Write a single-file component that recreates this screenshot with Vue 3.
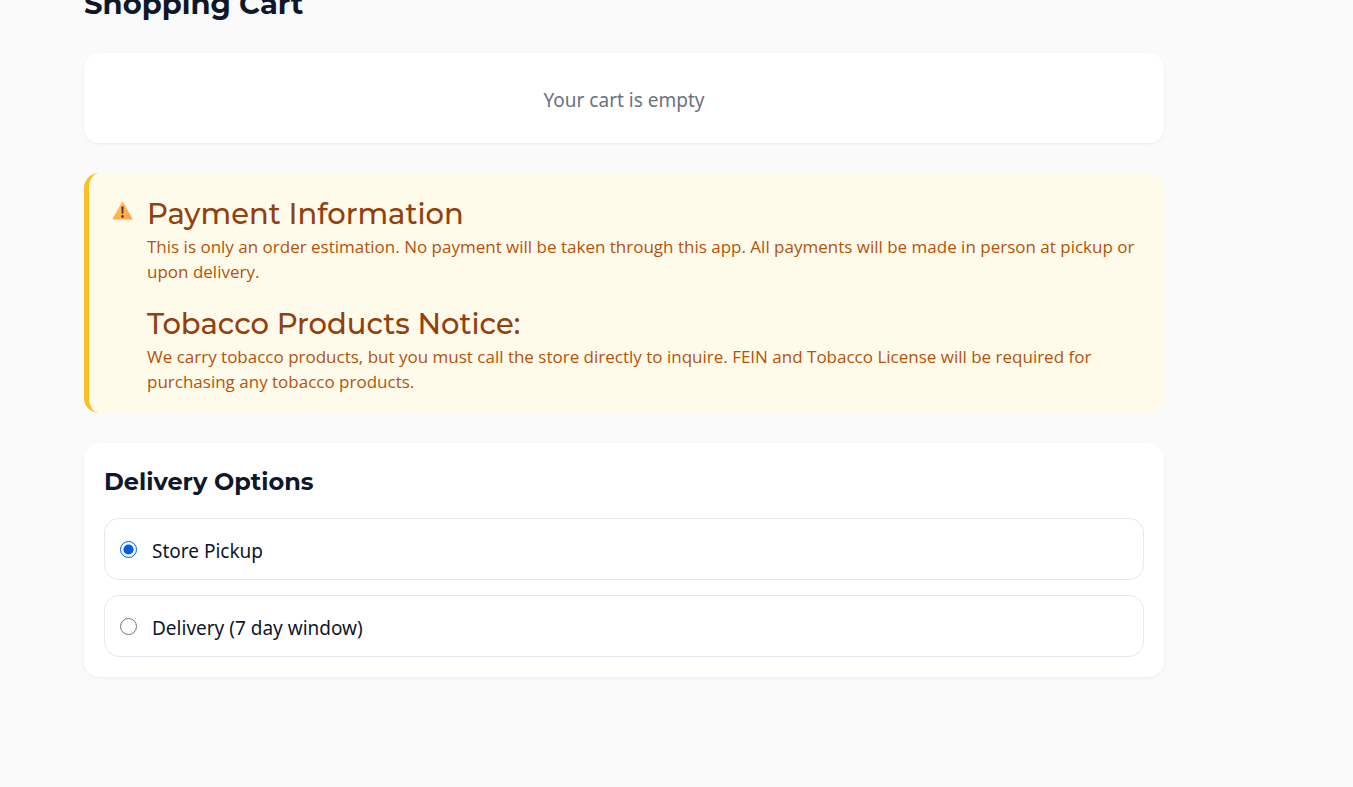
<script setup>
import { ref } from 'vue'

const method = ref('pickup')

const notices = [
  {
    title: 'Payment Information',
    text: 'This is only an order estimation. No payment will be taken through this app. All payments will be made in person at pickup or upon delivery.',
  },
  {
    title: 'Tobacco Products Notice:',
    text: 'We carry tobacco products, but you must call the store directly to inquire. FEIN and Tobacco License will be required for purchasing any tobacco products.',
  },
]

const options = [
  { value: 'pickup', label: 'Store Pickup' },
  { value: 'delivery', label: 'Delivery (7 day window)' },
]
</script>

<template>
  <main class="page">
    <h1 class="page-title">Shopping Cart</h1>

    <section class="card cart">
      <p class="empty">Your cart is empty</p>
    </section>

    <section class="notice">
      <svg class="warning" viewBox="0 0 20 20" aria-hidden="true">
        <defs>
          <linearGradient id="warning-fill" x1="0" y1="0" x2="1" y2="1">
            <stop offset="0" stop-color="#ffc857" />
            <stop offset="1" stop-color="#ff9f4a" />
          </linearGradient>
        </defs>
        <path
          d="M9.3 1.2Q10 .4 10.7 1.2L19.8 17.4Q20.2 18.6 19 18.6H1Q-.2 18.6.2 17.4Z"
          fill="url(#warning-fill)"
        />
        <path d="M8.9 5.6h2.2l-.3 7.2H9.2Z" fill="#433b4b" />
        <circle cx="10" cy="15.4" r="1.3" fill="#433b4b" />
      </svg>
      <div class="notice-list">
        <div v-for="notice in notices" :key="notice.title">
          <h2 class="notice-title">{{ notice.title }}</h2>
          <p class="notice-text">{{ notice.text }}</p>
        </div>
      </div>
    </section>

    <section class="card delivery">
      <h2 class="section-title">Delivery Options</h2>
      <div class="options">
        <label v-for="option in options" :key="option.value" class="option">
          <input v-model="method" class="radio" type="radio" name="method" :value="option.value" />
          <span class="option-label">{{ option.label }}</span>
        </label>
      </div>
    </section>
  </main>
</template>

<style>
html {
  background: #fafafa;
}
</style>

<style scoped>
.page {
  display: flow-root;
  margin: 0 189px 0 84px;
  padding-bottom: 40px;
  color: #0f172a;
  font-family: "Segoe UI", "Noto Sans", "Open Sans", sans-serif;
  font-size: 19px;
  line-height: 30px;
}

h1,
h2,
p {
  margin: 0;
}

.page-title,
.section-title,
.notice-title {
  font-family: Montserrat, Inter, sans-serif;
}

.page-title {
  margin: -16px 0 29px;
  font-size: 29px;
  font-weight: 700;
  line-height: 40px;
}

.card {
  border-radius: 15px;
  background: #fff;
  box-shadow: 0 1px 3px rgb(0 0 0 / 6%);
}

.cart {
  padding: 32px 30px 28px;
  text-align: center;
}

.empty {
  color: #6b7280;
}

.notice {
  display: flex;
  gap: 14px;
  margin: 30px 0;
  padding: 21px 24px 19px 23px;
  border-left: 5px solid #fbbf24;
  border-radius: 15px;
  background: #fffbeb;
}

.warning {
  flex: none;
  width: 21px;
  height: 20px;
  margin-top: 7px;
}

.notice-list {
  display: grid;
  gap: 20px;
}

.notice-title {
  color: #92400e;
  font-size: 29px;
  font-weight: 500;
  line-height: 40px;
}

.notice-text {
  color: #b45309;
  font-family: "Segoe UI", "Open Sans", "Noto Sans", sans-serif;
  font-size: 17px;
  line-height: 25px;
}

.delivery {
  padding: 20px;
}

.section-title {
  margin-bottom: 18px;
  font-size: 24px;
  font-weight: 700;
  line-height: 37px;
}

.options {
  display: grid;
  gap: 15px;
}

.option {
  display: flex;
  align-items: center;
  gap: 15px;
  padding: 13px 15px;
  border: 1px solid #e2e8f0;
  border-radius: 15px;
}

.option-label {
  padding-top: 4px;
}

.radio {
  width: 17px;
  height: 17px;
  margin: 0;
  accent-color: #005fe0;
}
</style>
